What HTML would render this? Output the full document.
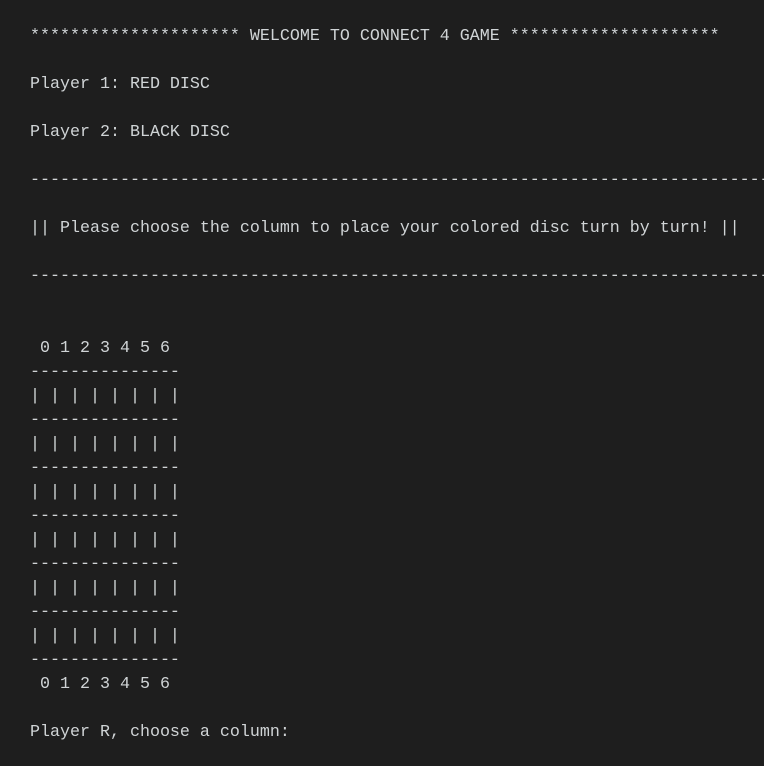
<!DOCTYPE html>
<html><head><style>
html,body{margin:0;padding:0;background:#1e1e1e;width:764px;height:766px;overflow:hidden}
pre{margin:0;padding:25px 0 0 30px;font-family:"Liberation Mono",monospace;font-size:16.67px;line-height:24px;color:#d0d4d6;white-space:pre;overflow:hidden}
</style></head><body><pre>********************* WELCOME TO CONNECT 4 GAME *********************

Player 1: RED DISC

Player 2: BLACK DISC

--------------------------------------------------------------------------------

|| Please choose the column to place your colored disc turn by turn! ||

--------------------------------------------------------------------------------


 0 1 2 3 4 5 6
---------------
| | | | | | | |
---------------
| | | | | | | |
---------------
| | | | | | | |
---------------
| | | | | | | |
---------------
| | | | | | | |
---------------
| | | | | | | |
---------------
 0 1 2 3 4 5 6

Player R, choose a column:</pre></body></html>
